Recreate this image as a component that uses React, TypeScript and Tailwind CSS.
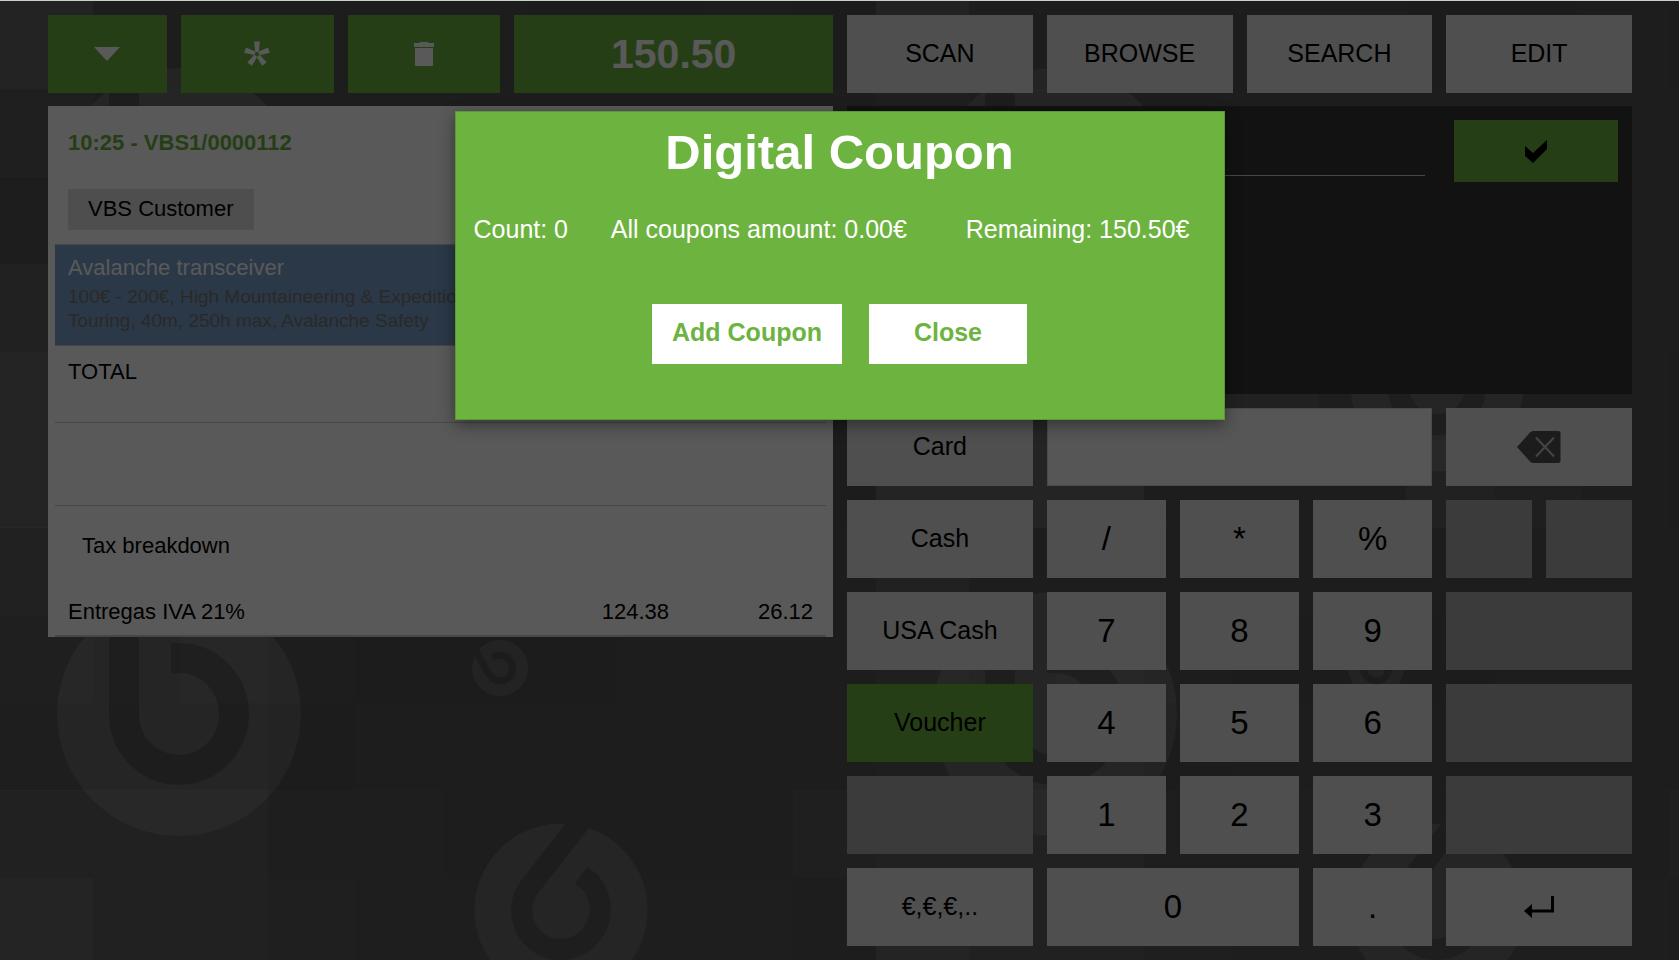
import React from "react";
import clsx from "clsx";

/* ===== BACKGROUND ===== */

// brightness steps over the base grey, one string per row of squares
const SQUARES = [
  "7112110010",
  "4222222222",
  "2222222222",
  "6333333222",
  "8877533210",
  "8881125420",
  "5222221222",
  "4342000111",
  "3220111111",
  "6663322224",
  "9554333331",
  "4222222222",
];

const LOGOS = [
  { cx: 179, cy: 189, scale: 1, angle: 0 },
  { cx: 561, cy: 384, scale: 0.71, angle: 0 },
  { cx: 179, cy: 713, scale: 1, angle: 0 },
  { cx: 500, cy: 667, scale: 0.23, angle: -30 },
  { cx: 561, cy: 909, scale: 0.71, angle: 38 },
];

const Background = () => (
  <svg className="absolute inset-0 w-full h-full" aria-hidden="true">
    <defs>
      <mask id="b-mask" maskUnits="userSpaceOnUse" x="-130" y="-130" width="260" height="260">
        <circle r="122" fill="white" />
        <path
          d="M-55 -130V0A55 56 0 1 0 0 -56H-8"
          fill="none"
          stroke="black"
          strokeWidth="30"
        />
      </mask>
      <pattern id="tiles" width="876" height="1052" patternUnits="userSpaceOnUse">
        <rect width="876" height="1052" fill="#505050" />
        {SQUARES.map((row, r) =>
          row.split("").map((step, c) => (
            <rect
              key={`${r}-${c}`}
              x={c === 0 ? 0 : Math.floor(93 + (c - 1) * 87.5)}
              y={Math.round(r * 87.7)}
              width={c === 0 ? 93 : c % 2 ? 87 : 88}
              height="88"
              fill="white"
              fillOpacity={Number(step) * 0.016}
            />
          ))
        )}
        {LOGOS.map((logo) => (
          <g
            key={`${logo.cx}-${logo.cy}`}
            transform={`translate(${logo.cx} ${logo.cy}) rotate(${logo.angle}) scale(${logo.scale})`}
          >
            <circle r="122" fill="white" fillOpacity="0.12" mask="url(#b-mask)" />
          </g>
        ))}
      </pattern>
    </defs>
    <rect width="100%" height="100%" fill="url(#tiles)" />
  </svg>
);

/* ===== ICONS ===== */

const CaretIcon = () => (
  <svg width="26" height="14" viewBox="0 0 26 14" fill="currentColor">
    <path d="M0 0H26L13 14Z" />
  </svg>
);

const AsteriskIcon = () => (
  <svg width="26" height="26" viewBox="-13 -13 26 26" fill="currentColor">
    {[0, 72, 144, 216, 288].map((angle) => (
      <path key={angle} d="M-2.8 -12.5H2.8L1.9 -2.6L0 -1.8L-1.9 -2.6Z" transform={`rotate(${angle})`} />
    ))}
  </svg>
);

const TrashIcon = () => (
  <svg width="20" height="24" viewBox="0 0 20 24" fill="currentColor">
    <path d="M0 1H5L6 0H14L15 1H20V5H0ZM1 6H19V24H1Z" />
  </svg>
);

const CheckIcon = () => (
  <svg width="22" height="23" viewBox="0 0 22 23" fill="currentColor">
    <path d="M0 6L8 13L22 0V9L8 23L0 16Z" />
  </svg>
);

const BackspaceIcon = () => (
  <svg width="44" height="32" viewBox="0 0 44 32">
    <path d="M0 16L13 1.5Q14.500 0 16 0H41.500Q43.500 0 43.500 2V30Q43.500 32 41.500 32H16Q14.500 32 13 30.500Z" fill="#505050" />
    <path d="M19 6.500L37 25.500M37 6.500L19 25.500" stroke="#c4c4c4" strokeWidth="2" />
  </svg>
);

const EnterIcon = () => (
  <svg width="30" height="23" viewBox="0 0 30 23">
    <path d="M28.500 0V15H6" fill="none" stroke="currentColor" strokeWidth="3" />
    <path d="M0 15L8 8V22Z" fill="currentColor" />
  </svg>
);

/* ===== BUTTONS ===== */

type KeyProps = {
  children?: React.ReactNode;
  label?: string;
  className?: string;
  tone?: "grey" | "green";
};

const Key = ({ children, label, className, tone = "grey" }: KeyProps) => (
  <button
    aria-label={label}
    disabled={!children}
    className={clsx(
      "h-[78px] flex items-center justify-center",
      !children ? "bg-[#a8a8a8]" : tone === "green" ? "bg-[#6db33f]" : "bg-[#e2e2e2]",
      className
    )}
  >
    {children}
  </button>
);

const PAYMENTS = ["Card", "Cash", "USA Cash", "Voucher", "", "€,€,€,.."];
const DIGITS = ["/", "*", "%", "7", "8", "9", "4", "5", "6", "1", "2", "3"];

/* ===== RECEIPT ===== */

const Receipt = () => (
  <section className="bg-white px-[7px] text-[22px] leading-7">
    <div className="px-[13px] pt-[23px] pb-[14px]">
      <h2 className="font-bold text-[#6db33f]">10:25 - VBS1/0000112</h2>
      <button className="mt-8 h-[41px] px-5 pb-[2px] bg-[#e0e0e0] block">VBS Customer</button>
    </div>

    <div className="border-y border-[#ccc] bg-[#7ba0cb] px-[13px] pt-[9px] pb-3">
      <p className="text-white">Avalanche transceiver</p>
      <p className="mt-[3px] text-[19px] leading-6 text-[#777]">
        100€ - 200€, High Mountaineering & Expedition,
        <br />
        Touring, 40m, 250h max, Avalanche Safety
      </p>
    </div>

    <div className="h-[77px] border-b border-[#ccc] px-[13px] pt-3">TOTAL</div>
    <div className="h-[83px] border-b border-[#ccc]" />

    <h3 className="px-[27px] pt-[26px]">Tax breakdown</h3>
    <div className="mt-[38px] border-b-2 border-[#ccc] px-[13px] pb-[9px]">
      <table className="w-full">
        <tbody>
          <tr>
            <td>Entregas IVA 21%</td>
            <td className="text-right">124.38</td>
            <td className="text-right w-36">26.12</td>
          </tr>
        </tbody>
      </table>
    </div>
  </section>
);

/* ===== KEYBOARD ===== */

const Keyboard = () => (
  <section className="grid grid-cols-4 gap-[14px]">
    <div className="flex flex-col gap-[14px] text-[25px]">
      {PAYMENTS.map((name) => (
        <Key key={name} tone={name === "Voucher" ? "green" : "grey"}>
          {name}
        </Key>
      ))}
    </div>

    <div className="col-span-2 grid grid-cols-3 gap-[14px] text-[33px]">
      <input
        aria-label="Amount"
        className="col-span-3 min-w-0 h-[78px] bg-[#f5f5f5] border border-[#d4d4d4] px-4 outline-none"
      />
      {DIGITS.map((digit) => (
        <Key key={digit}>{digit}</Key>
      ))}
      <Key className="col-span-2">0</Key>
      <Key>.</Key>
    </div>

    <div className="flex flex-col gap-[14px]">
      <Key label="Backspace">
        <BackspaceIcon />
      </Key>
      <div className="grid grid-cols-2 gap-[14px]">
        <Key label="Minus" />
        <Key label="Plus" />
      </div>
      <Key />
      <Key />
      <Key />
      <Key label="Enter">
        <EnterIcon />
      </Key>
    </div>
  </section>
);

/* ===== COUPON DIALOG ===== */

const CouponDialog = () => (
  <div
    role="dialog"
    aria-labelledby="coupon-title"
    className="w-[770px] max-w-full bg-[#6db33f] border border-[#5a9a33] text-white shadow-[0_5px_15px_rgba(0,0,0,0.4)] pt-[10px] pb-[55px]"
  >
    <h1 id="coupon-title" className="text-center font-bold text-[49px] leading-[60px]">
      Digital Coupon
    </h1>
    <div className="mt-8 grid grid-cols-[17fr_45fr_38fr] text-center text-[25px] leading-[30px] whitespace-nowrap">
      <span>Count: 0</span>
      <span>All coupons amount: 0.00€</span>
      <span>Remaining: 150.50€</span>
    </div>
    <div className="mt-[60px] flex justify-center gap-[27px] text-[25px] font-bold text-[#6db33f]">
      <button className="h-[60px] px-5 pb-[2px] bg-white">Add Coupon</button>
      <button className="h-[60px] min-w-[158px] pb-[2px] bg-white">Close</button>
    </div>
  </div>
);

const App = () => {
  return (
    <div className="relative min-h-screen border-t border-[#ccd0cc] bg-[#505050] font-['Liberation_Sans',Arial,sans-serif] text-black">
      <Background />

      <main className="relative grid grid-cols-2 gap-[14px] pl-12 pr-[47px] py-[14px]">
        {/* ===== LEFT SIDE ===== */}
        <div className="flex flex-col gap-[13px]">
          <div className="grid grid-cols-[119fr_153fr_153fr_319fr] gap-[14px] text-white">
            <Key tone="green" label="Menu">
              <CaretIcon />
            </Key>
            <Key tone="green" label="New">
              <AsteriskIcon />
            </Key>
            <Key tone="green" label="Delete">
              <TrashIcon />
            </Key>
            <Key tone="green" className="pt-[2px] text-[41px] font-bold">
              150.50
            </Key>
          </div>
          <Receipt />
        </div>
        {/* ===== LEFT SIDE END ===== */}

        {/* ===== RIGHT SIDE ===== */}
        <div className="flex flex-col">
          <div className="grid grid-cols-4 gap-[14px] text-[25px]">
            <Key>SCAN</Key>
            <Key>BROWSE</Key>
            <Key>SEARCH</Key>
            <Key>EDIT</Key>
          </div>
          <div className="mt-[13px] mb-[14px] h-[288px] bg-[#363636] p-[14px] flex items-start gap-[29px]">
            <input
              aria-label="Product code"
              className="flex-1 min-w-0 h-14 bg-transparent border-b border-[#ccc] text-white text-[25px] outline-none"
            />
            <button aria-label="Confirm" className="w-[164px] h-[62px] bg-[#6db33f] flex items-center justify-center">
              <CheckIcon />
            </button>
          </div>
          <Keyboard />
        </div>
        {/* ===== RIGHT SIDE END ===== */}
      </main>

      {/* ===== OVERLAY ===== */}
      <div className="absolute inset-0 bg-black/65 flex justify-center items-start pt-[110px]">
        <CouponDialog />
      </div>
    </div>
  );
};

export default App;
